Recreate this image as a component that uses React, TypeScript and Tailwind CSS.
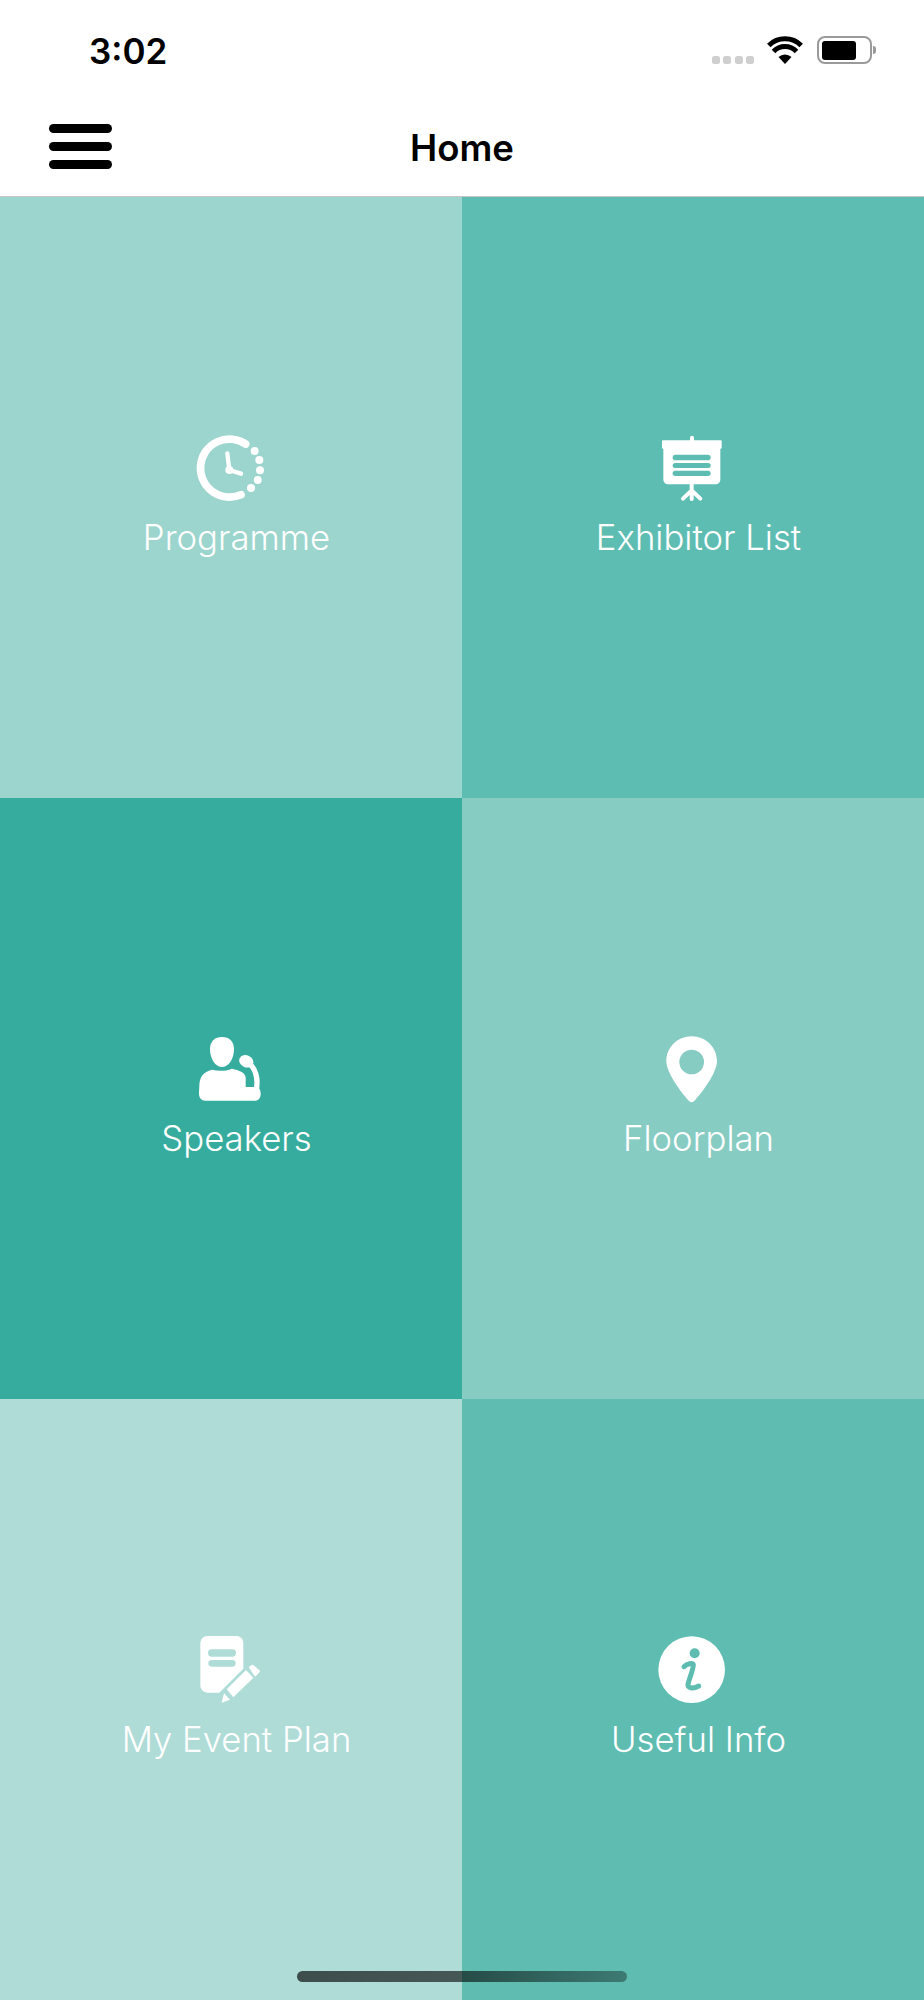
const tiles = [
  { label: "Programme", bg: "bg-[#9bd5cd]", icon: <ClockIcon /> },
  { label: "Exhibitor List", bg: "bg-[#5ebdb2]", icon: <BoardIcon /> },
  { label: "Speakers", bg: "bg-[#36ac9e]", icon: <SpeakerIcon /> },
  { label: "Floorplan", bg: "bg-[#87ccc3]", icon: <PinIcon /> },
  { label: "My Event Plan", bg: "bg-[#afdcd7]", icon: <PlanIcon /> },
  { label: "Useful Info", bg: "bg-[#5ebcb1]", icon: <InfoIcon /> },
];

function ClockIcon() {
  return (
    <svg width="70" height="70" viewBox="198 40 210 210" fill="none">
      <path d="M347 73 A87 87 0 1 0 333 225" stroke="#fff" strokeWidth="23" strokeLinecap="round" />
      <path d="M292 101 L298 151 L333 162" stroke="#fff" strokeWidth="13" strokeLinecap="round" strokeLinejoin="round" />
      <circle cx="298" cy="151" r="12" fill="#fff" />
      <circle cx="374" cy="94" r="12" fill="#fff" />
      <circle cx="388" cy="121" r="12" fill="#fff" />
      <circle cx="390" cy="152" r="12" fill="#fff" />
      <circle cx="383" cy="181" r="12" fill="#fff" />
      <circle cx="363" cy="205" r="12" fill="#fff" />
    </svg>
  );
}

function BoardIcon() {
  return (
    <svg width="70" height="70" viewBox="204 40 210 210" fill="none">
      <path d="M300 62 V54 a6 6 0 0 1 12 0 V62 H392 a3 3 0 0 1 3 3 V84 a3 3 0 0 1 -3 3 H391 V180 a14 14 0 0 1 -14 14 H234 a14 14 0 0 1 -14 -14 V87 H219 a3 3 0 0 1 -3 -3 V65 a3 3 0 0 1 3 -3 Z" fill="#fff" />
      <rect x="248" y="105" width="114" height="17" rx="8.5" fill="#5ebdb2" />
      <rect x="248" y="130" width="114" height="15" rx="7.5" fill="#5ebdb2" />
      <rect x="248" y="153" width="114" height="16" rx="8" fill="#5ebdb2" />
      <path d="M305 192 V238 M305 212 L279 237 M305 212 L331 237" stroke="#fff" strokeWidth="12" strokeLinecap="round" />
    </svg>
  );
}

function SpeakerIcon() {
  return (
    <svg width="70" height="70" viewBox="138 43 210 210" fill="none">
      <path d="M180 88 C180 66 194 52 216 52 C238 52 252 66 252 88 C252 118 236 142 216 142 C196 142 180 118 180 88 Z" fill="#fff" />
      <path d="M148 200 C148 172 160 156 186 150 C204 155 226 155 246 147 C268 152 284 158 287 172 V202 H318 C327 202 332 210 332 222 C332 236 325 243 314 243 H166 C154 243 146 234 147 218 Z" fill="#fff" />
      <ellipse cx="289" cy="125" rx="22" ry="18" transform="rotate(25 289 125)" fill="#fff" />
      <path d="M296 130 C315 145 327 175 318 212" stroke="#fff" strokeWidth="16" />
    </svg>
  );
}

function PinIcon() {
  return (
    <svg width="70" height="70" viewBox="144 43 210 210" fill="none">
      <path fillRule="evenodd" clipRule="evenodd" d="M245 50 C288 50 321 84 321 125 C321 160 274 222 252 245 C248 249 242 249 238 245 C216 222 169 160 169 125 C169 84 202 50 245 50 Z M245 90 A37 37 0 1 0 245 164 A37 37 0 1 0 245 90 Z" fill="#fff" />
    </svg>
  );
}

function PlanIcon() {
  return (
    <svg width="70" height="70" viewBox="228 49 210 210" fill="none">
      <path fillRule="evenodd" clipRule="evenodd" d="M262 52 H350 A20 20 0 0 1 370 72 V150 L298 222 H262 A21 21 0 0 1 241 201 V73 A21 21 0 0 1 262 52 Z M275 92 A11 11 0 0 0 275 114 H337 A11 11 0 0 0 337 92 Z M275 124 A10 10 0 0 0 275 144 H337 A10 10 0 0 0 337 124 Z" fill="#fff" />
      <path d="M320 212 L378 154 L400 177 L340 236 Z" fill="#fff" />
      <path d="M390 146 L398 141 L417 158 L406 170 Z" fill="#fff" stroke="#fff" strokeWidth="6" strokeLinejoin="round" />
      <path d="M312 224 L330 243 L305 252 Z" fill="#fff" />
    </svg>
  );
}

function InfoIcon() {
  return (
    <svg width="70" height="70" viewBox="174 49 210 210" fill="none">
      <circle cx="275" cy="153" r="100" fill="#fff" />
      <circle cx="284" cy="104" r="15" fill="#5ebcb1" />
      <path d="M252 144 C262 134 278 132 280 138 C282 146 266 186 264 196 C262 208 278 212 296 202" stroke="#5ebcb1" strokeWidth="15" strokeLinecap="round" />
    </svg>
  );
}

function StatusIcons() {
  return (
    <div className="flex items-start">
      <div className="mt-[20px] flex gap-[3.3px]">
        <div className="size-[8px] rounded-[2.5px] bg-[#cfcfcf]" />
        <div className="size-[8px] rounded-[2.5px] bg-[#cfcfcf]" />
        <div className="size-[8px] rounded-[2.5px] bg-[#cfcfcf]" />
        <div className="size-[8px] rounded-[2.5px] bg-[#cfcfcf]" />
      </div>
      <svg className="ml-[13px]" width="36" height="28" viewBox="0 0 36 28" fill="none">
        <path d="M18 28 L11.5 21 A9.5 9.5 0 0 1 24.5 21 Z" fill="#000" />
        <path d="M6.5 15.5 A16 16 0 0 1 29.5 15.5" stroke="#000" strokeWidth="5" />
        <path d="M1.8 9.5 A23 23 0 0 1 34.2 9.5" stroke="#000" strokeWidth="5" />
      </svg>
      <div className="ml-[14px] flex items-center">
        <div className="h-[28px] w-[55px] rounded-[8px] border-[2px] border-[#9a9a9a] p-[2.5px]">
          <div className="h-full w-[34px] rounded-[3px] bg-black" />
        </div>
        <div className="ml-[1px] h-[8px] w-[3px] rounded-r-full bg-[#9a9a9a]" />
      </div>
    </div>
  );
}

export default function App() {
  return (
    <div className="relative flex h-[2000px] w-[924px] flex-col overflow-hidden bg-white font-['Inter',sans-serif]">
      <header className="h-[197px] shrink-0 border-b border-[#c6c6c6]">
        <div className="flex h-[100px] items-start justify-between pl-[89px] pr-[48px] pt-[36px]">
          <span className="text-[35px] leading-[30px] font-semibold text-black">3:02</span>
          <StatusIcons />
        </div>
        <div className="grid h-[96px] grid-cols-[1fr_auto_1fr] items-center">
          <div className="mb-[4px] ml-[49px] flex w-[63px] flex-col gap-[9px]">
            <div className="h-[9px] rounded-full bg-black" />
            <div className="h-[9px] rounded-full bg-black" />
            <div className="h-[9px] rounded-full bg-black" />
          </div>
          <h1 className="text-[36.5px] font-semibold text-black">Home</h1>
        </div>
      </header>
      <main className="grid flex-1 grid-cols-2 grid-rows-3">
        {tiles.map((tile) => (
          <div key={tile.label} className={`flex flex-col items-center justify-center ${tile.bg}`}>
            {tile.icon}
            <span className="mt-[10px] pl-[11px] text-[34.7px] leading-[49px] font-light text-white">{tile.label}</span>
          </div>
        ))}
      </main>
      <div className="absolute bottom-[18px] left-[297px] h-[11px] w-[330px] rounded-full bg-gradient-to-r from-black/65 via-black/60 to-black/35" />
    </div>
  );
}
